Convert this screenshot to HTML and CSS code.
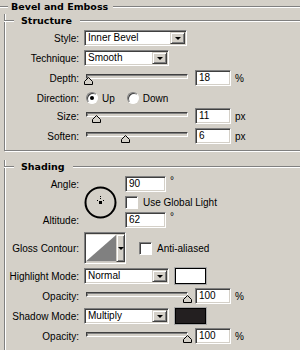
FILE: index.html
```html
<!DOCTYPE html>
<html lang="en">
<head>
    <meta charset="UTF-8">
    <title>Bevel and Emboss</title>
    <link rel="stylesheet" href="styles.css">
</head>
<body>
<div class="panel">
    <div class="title-row"><i class="rule seg"></i><h1>Bevel and Emboss</h1><i class="rule"></i></div>

    <!-- Structure group -->
    <section class="box structure">
        <div class="box-head"><i class="rule seg"></i><h2>Structure</h2><i class="rule"></i></div>

        <div class="row">
            <label>Style:</label>
            <div class="ctrl">
                <div class="select w-style"><span class="val">Inner Bevel</span><span class="drop"></span></div>
            </div>
        </div>

        <div class="row">
            <label>Technique:</label>
            <div class="ctrl">
                <div class="select w-mode"><span class="val">Smooth</span><span class="drop"></span></div>
            </div>
        </div>

        <div class="row">
            <label>Depth:</label>
            <div class="ctrl">
                <div class="slider"><div class="track"></div><svg class="thumb" style="left: 3%" width="9" height="8" viewBox="0 0 9 8"><path d="M4.5 0.5 L8.5 4.5 V7.5 H0.5 V4.5 Z" fill="#d4d0c8" stroke="#000"/></svg></div>
                <div class="num">18</div><span class="unit">%</span>
            </div>
        </div>

        <div class="row row-dir">
            <label>Direction:</label>
            <div class="ctrl">
                <span class="radio on"></span><span class="opt">Up</span>
                <span class="radio"></span><span class="opt">Down</span>
            </div>
        </div>

        <div class="row row-size">
            <label>Size:</label>
            <div class="ctrl">
                <div class="slider"><div class="track"></div><svg class="thumb" style="left: 11%" width="9" height="8" viewBox="0 0 9 8"><path d="M4.5 0.5 L8.5 4.5 V7.5 H0.5 V4.5 Z" fill="#d4d0c8" stroke="#000"/></svg></div>
                <div class="num">11</div><span class="unit">px</span>
            </div>
        </div>

        <div class="row">
            <label>Soften:</label>
            <div class="ctrl">
                <div class="slider"><div class="track"></div><svg class="thumb" style="left: 39%" width="9" height="8" viewBox="0 0 9 8"><path d="M4.5 0.5 L8.5 4.5 V7.5 H0.5 V4.5 Z" fill="#d4d0c8" stroke="#000"/></svg></div>
                <div class="num">6</div><span class="unit">px</span>
            </div>
        </div>
    </section>

    <!-- Shading group -->
    <section class="box shading">
        <div class="box-head"><i class="rule seg"></i><h2>Shading</h2><i class="rule"></i></div>

        <div class="angle-block">
            <label class="lbl-angle">Angle:</label>
            <svg class="dial" width="33" height="33" viewBox="0 0 33 33">
                <circle cx="16.5" cy="16.5" r="15" fill="none" stroke="#000" stroke-width="2"/>
                <rect x="16" y="10" width="1" height="1" fill="#000"/>
                <rect x="16" y="12" width="1" height="1" fill="#000"/>
                <rect x="13" y="14" width="1" height="1" fill="#000"/>
                <rect x="19" y="14" width="1" height="1" fill="#000"/>
                <rect x="15" y="15" width="3" height="3" fill="#000"/>
            </svg>
            <div class="ctrl a1"><div class="num wide">90</div><span class="unit deg">°</span></div>
            <div class="ctrl a2"><span class="check"></span><span class="opt">Use Global Light</span></div>
            <label class="lbl-alt">Altitude:</label>
            <div class="ctrl a3"><div class="num wide">62</div><span class="unit deg">°</span></div>
        </div>

        <div class="row row-gloss">
            <label>Gloss Contour:</label>
            <div class="ctrl">
                <div class="contour">
                    <svg width="32" height="28" viewBox="0 0 32 28"><rect width="32" height="28" fill="#fff"/><polygon points="0,28 32,0 32,28" fill="#808080"/></svg>
                    <span class="drop"></span>
                </div>
                <span class="check gap-check"></span><span class="opt">Anti-aliased</span>
            </div>
        </div>

        <div class="row">
            <label>Highlight Mode:</label>
            <div class="ctrl">
                <div class="select w-mode"><span class="val">Normal</span><span class="drop"></span></div>
                <span class="swatch light"></span>
            </div>
        </div>

        <div class="row">
            <label>Opacity:</label>
            <div class="ctrl">
                <div class="slider"><div class="track"></div><svg class="thumb" style="left: 100%" width="9" height="8" viewBox="0 0 9 8"><path d="M4.5 0.5 L8.5 4.5 V7.5 H0.5 V4.5 Z" fill="#d4d0c8" stroke="#000"/></svg></div>
                <div class="num">100</div><span class="unit">%</span>
            </div>
        </div>

        <div class="row">
            <label>Shadow Mode:</label>
            <div class="ctrl">
                <div class="select w-mode"><span class="val">Multiply</span><span class="drop"></span></div>
                <span class="swatch dark"></span>
            </div>
        </div>

        <div class="row">
            <label>Opacity:</label>
            <div class="ctrl">
                <div class="slider"><div class="track"></div><svg class="thumb" style="left: 100%" width="9" height="8" viewBox="0 0 9 8"><path d="M4.5 0.5 L8.5 4.5 V7.5 H0.5 V4.5 Z" fill="#d4d0c8" stroke="#000"/></svg></div>
                <div class="num">100</div><span class="unit">%</span>
            </div>
        </div>
    </section>
</div>
</body>
</html>
```

FILE: styles.css
```css
/* Reset */
* {
    margin: 0;
    padding: 0;
    box-sizing: border-box;
}

body {
    background: #d4d0c8;
    color: #000;
    font-family: 'Liberation Sans', Arial, sans-serif;
    font-size: 10px;
    width: 300px;
    height: 350px;
    overflow: hidden;
}

.panel {
    width: 330px;
}

/* Etched rules */
.rule {
    display: block;
    flex: 1;
    height: 0;
    border-top: 1px solid #808080;
    border-bottom: 1px solid #fff;
}

.title-row .seg {
    flex: 0 0 8px;
}

.box-head .seg {
    flex: 0 0 10px;
}

.title-row {
    display: flex;
    align-items: center;
    height: 14px;
}

h1,
h2 {
    font-family: 'DejaVu Sans', Verdana, sans-serif;
    font-weight: bold;
    font-size: 9.5px;
    line-height: 14px;
    white-space: nowrap;
    flex: none;
}

h1 {
    width: 105px;
    padding-left: 3px;
}

h2 {
    padding: 0 8px 0 7px;
}

/* Group boxes */
.box {
    margin: 6px 0 0 4px;
    width: 320px;
    border: 1px solid #808080;
    border-top: 0;
    box-shadow: 1px 1px 0 #fff, inset 1px 0 0 #fff;
    padding-bottom: 6px;
}

.box.shading {
    margin-top: 15px;
    height: 200px;
}

.box-head {
    display: flex;
    align-items: center;
    height: 14px;
    margin: -6px -1px 0;
}

/* Form rows */
.row {
    display: grid;
    grid-template-columns: 74px 1fr;
    column-gap: 5px;
    align-items: center;
    height: 16px;
    margin-top: 4px;
}

.box-head + .row {
    margin-top: 2px;
}

.row-dir {
    height: 14px;
    margin-top: 5px;
}

.row-size {
    margin-top: 3px;
}

.row-gloss {
    height: 32px;
}

label {
    text-align: right;
    white-space: nowrap;
}

.ctrl {
    display: flex;
    align-items: center;
    white-space: nowrap;
}

/* Dropdowns */
.select {
    display: flex;
    height: 16px;
    border: 1px solid;
    border-color: #808080 #fff #fff #808080;
    box-shadow: inset 1px 1px 0 #404040, inset -1px -1px 0 #d4d0c8;
    padding: 1px;
    background: #fff;
}

.w-style {
    width: 103px;
}

.w-mode {
    width: 85px;
}

.select .val {
    flex: 1;
    line-height: 12px;
    padding-left: 2px;
}

.drop {
    display: flex;
    align-items: center;
    justify-content: center;
    width: 15px;
    background: #d4d0c8;
    border: 1px solid;
    border-color: #d4d0c8 #404040 #404040 #d4d0c8;
    box-shadow: inset 1px 1px 0 #fff, inset -1px -1px 0 #808080;
}

.drop::after {
    content: "";
    border-left: 3px solid transparent;
    border-right: 3px solid transparent;
    border-top: 3px solid #000;
}

/* Number fields */
.num {
    width: 36px;
    height: 16px;
    margin-left: 7px;
    padding-left: 3px;
    line-height: 14px;
    background: #fff;
    border: 1px solid;
    border-color: #808080 #fff #fff #808080;
    box-shadow: inset 1px 1px 0 #404040, inset -1px -1px 0 #d4d0c8;
}

.num.wide {
    width: 41px;
    margin-left: 0;
}

.unit {
    margin-left: 4px;
}

.unit.deg {
    align-self: flex-start;
    line-height: 10px;
}

/* Sliders */
.slider {
    position: relative;
    width: 102px;
    height: 16px;
    margin-left: 2px;
}

.track {
    margin-top: 4px;
    height: 5px;
    border: 1px solid;
    border-color: #404040 #fff #fff #404040;
    box-shadow: inset 1px 1px 0 #808080;
    background: #d4d0c8;
}

.thumb {
    position: absolute;
    top: 7px;
    margin-left: -5px;
    display: block;
}

/* Radio and check */
.radio {
    position: relative;
    width: 12px;
    height: 12px;
    margin-left: 2px;
    border-radius: 50%;
    border: 1px solid;
    border-color: #808080 #fff #fff #808080;
    box-shadow: inset 1px 1px 0 #404040;
    background: #fff;
}

.radio.on::after {
    content: "";
    position: absolute;
    left: 3px;
    top: 3px;
    width: 4px;
    height: 4px;
    border-radius: 50%;
    background: #000;
}

.radio + .opt {
    margin-left: 4px;
    margin-right: 10px;
}

.check {
    width: 13px;
    height: 13px;
    border: 1px solid;
    border-color: #808080 #fff #fff #808080;
    box-shadow: inset 1px 1px 0 #404040;
    background: #fff;
}

.check + .opt {
    margin-left: 5px;
}

.gap-check {
    margin-left: 13px;
}

/* Angle block */
.angle-block {
    display: grid;
    grid-template-columns: 74px 36px auto;
    grid-template-rows: 16px 20px 16px;
    column-gap: 5px;
    align-items: center;
    margin-top: 2px;
}

.lbl-angle {
    grid-column: 1;
    grid-row: 1;
}

.lbl-alt {
    grid-column: 1;
    grid-row: 3;
}

.dial {
    grid-column: 2;
    grid-row: 1 / 4;
    display: block;
}

.a1 {
    grid-column: 3;
    grid-row: 1;
    height: 16px;
}

.a2 {
    grid-column: 3;
    grid-row: 2;
}

.a3 {
    grid-column: 3;
    grid-row: 3;
    height: 16px;
}

/* Gloss contour */
.contour {
    display: flex;
    width: 42px;
    height: 32px;
    border: 1px solid;
    border-color: #808080 #fff #fff #808080;
    box-shadow: inset 1px 1px 0 #404040;
    padding: 1px 0 1px 1px;
}

.contour svg {
    display: block;
}

.contour .drop {
    width: 9px;
}

/* Colour swatches */
.swatch {
    width: 31px;
    height: 16px;
    margin-left: 6px;
    border: 1px solid #000;
    box-shadow: 0 0 0 1px #a8a8a8;
}

.swatch.light {
    background: #fff;
}

.swatch.dark {
    background: #231f20;
}
```
